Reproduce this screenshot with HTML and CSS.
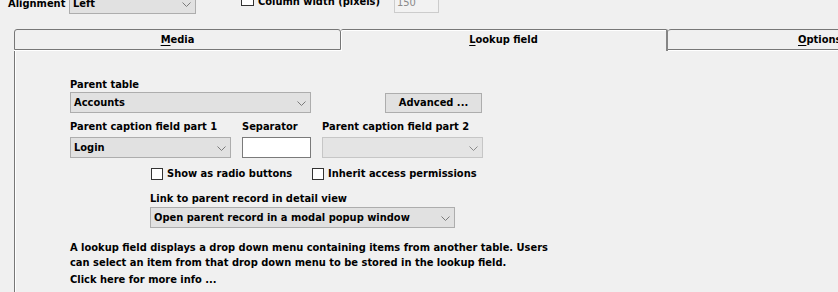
FILE: index.html
```html
<!DOCTYPE html>
<html lang="en">
<head>
<meta charset="utf-8">
<title>Lookup field</title>
<link rel="stylesheet" href="styles.css">
</head>
<body>
<div class="toprow">
  <span class="top-lbl">Alignment</span>
  <div class="combo combo-left"><span>Left</span><svg class="chev" width="9" height="5" viewBox="0 0 9 5"><polyline points="0.5,0.5 4.5,4.5 8.5,0.5" fill="none" stroke="#7a7a7a" stroke-width="1"/></svg></div>
  <div class="top-check"><span class="box"></span><span class="top-check-text">Column width (pixels)</span></div>
  <div class="textbox textbox-disabled">150</div>
</div>

<div class="tabview">
  <div class="tabstrip">
    <div class="tab"><u>M</u>edia</div>
    <div class="tab tab-active"><u>L</u>ookup field</div>
    <div class="tab tab-last"><u>O</u>ptions</div>
  </div>
  <div class="panel">
    <div class="form-grid">
      <div class="lbl lbl-first r1 span2">Parent table</div>
      <div class="combo r2 span2"><span>Accounts</span><svg class="chev" width="9" height="5" viewBox="0 0 9 5"><polyline points="0.5,0.5 4.5,4.5 8.5,0.5" fill="none" stroke="#7a7a7a" stroke-width="1"/></svg></div>
      <div class="btn r2">Advanced ...</div>
      <div class="lbl lbl-second r3">Parent caption field part 1</div>
      <div class="lbl lbl-second r3">Separator</div>
      <div class="lbl lbl-second r3">Parent caption field part 2</div>
      <div class="combo r4"><span>Login</span><svg class="chev" width="9" height="5" viewBox="0 0 9 5"><polyline points="0.5,0.5 4.5,4.5 8.5,0.5" fill="none" stroke="#7a7a7a" stroke-width="1"/></svg></div>
      <div class="textbox r4"></div>
      <div class="combo combo-disabled r4"><span></span><svg class="chev" width="9" height="5" viewBox="0 0 9 5"><polyline points="0.5,0.5 4.5,4.5 8.5,0.5" fill="none" stroke="#8a8a8a" stroke-width="1"/></svg></div>
    </div>

    <div class="indent">
      <div class="checks">
        <div class="check"><span class="box"></span><span>Show as radio buttons</span></div>
        <div class="check"><span class="box"></span><span>Inherit access permissions</span></div>
      </div>
      <div class="lbl lbl-link">Link to parent record in detail view</div>
      <div class="combo combo-wide"><span>Open parent record in a modal popup window</span><svg class="chev" width="9" height="5" viewBox="0 0 9 5"><polyline points="0.5,0.5 4.5,4.5 8.5,0.5" fill="none" stroke="#7a7a7a" stroke-width="1"/></svg></div>
    </div>

    <p class="info">A lookup field displays a drop down menu containing items from another table. Users can select an item from that drop down menu to be stored in the lookup field.</p>
    <p class="more">Click here for more info ...</p>
  </div>
</div>
</body>
</html>
```

FILE: styles.css
```css
* {
  box-sizing: border-box;
}

html,
body {
  margin: 0;
  overflow: hidden;
  background: #f0f0f0;
}

body {
  width: 838px;
  height: 292px;
  color: #000;
  font-family: "DejaVu Sans Condensed", "DejaVu Sans", sans-serif;
  font-stretch: condensed;
  font-weight: bold;
  font-size: 11px;
  line-height: 13px;
}

/* ---------- top (scrolled) row ---------- */
.toprow {
  display: flex;
  align-items: flex-start;
  height: 21px;
  margin-top: -7px;
  padding-left: 8px;
}

.top-lbl {
  width: 61px;
  line-height: 21px;
  white-space: nowrap;
}

.combo {
  display: flex;
  align-items: center;
  justify-content: space-between;
  height: 21px;
  padding: 0 4px 0 3px;
  background: #e1e1e1;
  border: 1px solid #adadad;
  line-height: 19px;
  white-space: nowrap;
  overflow: hidden;
}

.chev {
  flex: 0 0 auto;
  margin-top: 2px;
}

.combo-left {
  width: 127px;
}

.top-check {
  display: flex;
  align-items: flex-start;
  gap: 4px;
  width: 153px;
  margin-left: 45px;
  white-space: nowrap;
}

.top-check-text {
  line-height: 17px;
}

.box {
  flex: 0 0 auto;
  width: 12px;
  height: 12px;
  background: #fff;
  border: 1px solid #333;
}

.top-check .box {
  width: 13px;
  height: 13px;
}

.textbox {
  height: 21px;
  background: #fff;
  border: 1px solid #7a7a7a;
}

.textbox-disabled {
  width: 45px;
  margin-top: -1px;
  padding-left: 2px;
  background: #f2f2f2;
  border-color: #cccccc;
  color: #8a8a8a;
  font-weight: normal;
  line-height: 19px;
}

/* ---------- tabs ---------- */
.tabview {
  margin: 15px 0 0 14px;
}

.tabstrip {
  display: flex;
  align-items: flex-start;
  height: 22px;
  overflow: hidden;
}

.tab {
  flex: 0 0 327px;
  height: 21px;
  border: 1px solid #777;
  border-radius: 3px 3px 0 0;
  text-align: center;
  line-height: 19px;
  white-space: nowrap;
  box-shadow: 0 1px 0 #fff;
}

.tab + .tab {
  border-left: none;
}

.tab-active {
  height: 22px;
  border-bottom: none;
  border-right: 2px solid #858585;
  border-radius: 2px 2px 0 0;
  box-shadow: inset 1px 1px 0 #fff;
}

.tab-last {
  text-align: left;
  padding-left: 130px;
}

.tab u {
  text-underline-offset: 2px;
}

/* ---------- panel ---------- */
.panel {
  height: 260px;
  padding: 27px 0 0 55px;
  border-left: 1px solid #777;
  box-shadow: inset 1px 0 0 #fff;
}

.form-grid {
  display: grid;
  grid-template-columns: 161px 69px 161px;
  column-gap: 11px;
}

.r1 { grid-row: 1; }
.r2 { grid-row: 2; }
.r3 { grid-row: 3; }
.r4 { grid-row: 4; }

.span2 {
  grid-column: 1 / span 2;
}

.lbl {
  white-space: nowrap;
}

.lbl-first {
  margin-bottom: 1px;
}

.btn {
  grid-column: 3;
  justify-self: end;
  align-self: center;
  width: 97px;
  height: 20px;
  margin-right: 1px;
  background: #e1e1e1;
  border: 1px solid #adadad;
  text-align: center;
  line-height: 18px;
  white-space: nowrap;
}

.lbl-second {
  margin-top: 7px;
  margin-bottom: 4px;
}

.combo-disabled {
  background: #e4e4e4;
  border-color: #c6c6c6;
}

.indent {
  margin-left: 80px;
}

.checks {
  display: grid;
  grid-template-columns: 161px auto;
  margin-top: 9px;
  padding-left: 1px;
}

.check {
  display: flex;
  align-items: center;
  gap: 4px;
  white-space: nowrap;
}

.lbl-link {
  margin-top: 12px;
}

.combo-wide {
  width: 305px;
  margin-top: 2px;
}

.info {
  width: 480px;
  margin: 12px 0 0;
  line-height: 15px;
}

.more {
  margin: 2px 0 0;
  line-height: 15px;
}
```
